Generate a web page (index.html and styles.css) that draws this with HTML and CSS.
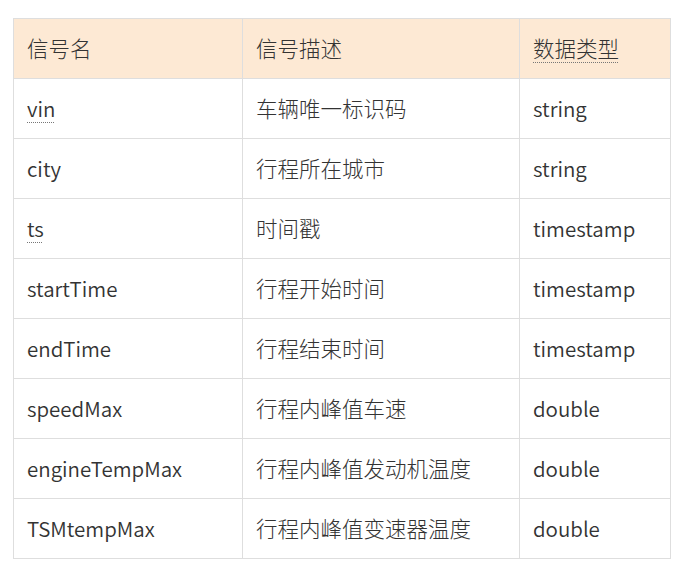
FILE: index.html
```html
<!DOCTYPE html>
<html lang="zh">
<head>
<meta charset="utf-8">
<link rel="stylesheet" href="styles.css">
</head>
<body>
<table class="sig-table">
  <thead>
    <tr><th class="c1">信号名</th><th class="c2">信号描述</th><th class="c3"><span class="dot">数据类型</span></th></tr>
  </thead>
  <tbody>
    <tr><td><span class="dot">vin</span></td><td>车辆唯一标识码</td><td>string</td></tr>
    <tr><td>city</td><td>行程所在城市</td><td>string</td></tr>
    <tr><td><span class="dot">ts</span></td><td>时间戳</td><td>timestamp</td></tr>
    <tr><td>startTime</td><td>行程开始时间</td><td>timestamp</td></tr>
    <tr><td>endTime</td><td>行程结束时间</td><td>timestamp</td></tr>
    <tr><td>speedMax</td><td>行程内峰值车速</td><td>double</td></tr>
    <tr><td>engineTempMax</td><td>行程内峰值发动机温度</td><td>double</td></tr>
    <tr><td>TSMtempMax</td><td>行程内峰值变速器温度</td><td>double</td></tr>
  </tbody>
</table>
</body>
</html>
```
FILE: styles.css
```css
html, body {
  margin: 0;
  padding: 0;
  background: #ffffff;
}
body {
  padding: 18px 13px 0 13px;
  font-family: "Noto Sans CJK SC", "Noto Sans", sans-serif;
  color: #333333;
}
.sig-table {
  border-collapse: collapse;
  width: 657px;
  table-layout: fixed;
  font-size: 20.5px;
}
.sig-table th,
.sig-table td {
  border: 1px solid #dedede;
  height: 60px;
  padding: 0 13px 2px 13px;
  text-align: left;
  font-weight: 350;
  vertical-align: middle;
  white-space: nowrap;
  box-sizing: border-box;
}
.sig-table thead th,
.sig-table tbody td:nth-child(2) {
  font-size: 21.5px;
  font-weight: 300;
}
.sig-table thead th {
  background: #fde9d4;
}
.c1 { width: 229px; }
.c2 { width: 277px; }
.c3 { width: 151px; }
.dot {
  text-decoration: underline dotted #777;
  text-underline-offset: 5px;
  text-decoration-thickness: 1px;
}
```
